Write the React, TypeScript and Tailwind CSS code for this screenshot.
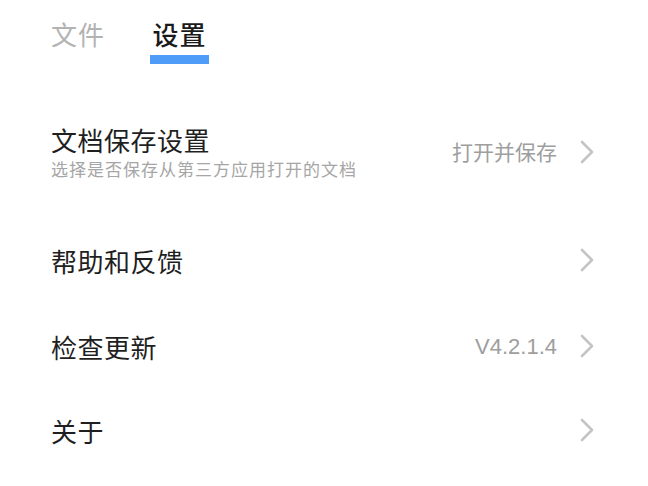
import React from "react";

const Chevron = () => (
  <svg width="14" height="24" viewBox="0 0 14 24" className="shrink-0">
    <path d="M2 2 L12 12 L2 22" fill="none" stroke="#c4c4c4" strokeWidth="2.6" strokeLinecap="round" strokeLinejoin="round" />
  </svg>
);

const font = { fontFamily: '"Noto Sans CJK SC", "Noto Sans", sans-serif' };

export default function App() {
  return (
    <div className="w-[648px] h-[486px] bg-white overflow-hidden" style={font}>
      <div className="flex items-start pl-[51px] pt-[16px] h-[65px]">
        <div className="text-[26px] leading-[36px] text-[#b3b3b3] tracking-[1px]">文件</div>
        <div className="ml-[45px] flex flex-col items-center">
          <div className="text-[26px] leading-[36px] text-[#1a1a1a] font-medium tracking-[1px]">设置</div>
          <div className="mt-[3px] w-[59px] h-[9px] bg-[#4f9cf8]" />
        </div>
      </div>
      <div className="h-[23px]" />
      <div className="flex items-center pl-[51px] pr-[54px] h-[128px]">
        <div className="flex-1 flex flex-col">
          <div className="text-[26px] leading-[32px] text-[#1f1f1f] tracking-[0.5px]">文档保存设置</div>
          <div className="text-[17px] leading-[24px] mt-[1px] text-[#a6a6a6] tracking-[1px]">选择是否保存从第三方应用打开的文档</div>
        </div>
        <div className="text-[21px] text-[#9e9e9e] mr-[23px]">打开并保存</div>
        <Chevron />
      </div>
      <div className="flex items-center pl-[51px] pr-[54px] h-[88px]">
        <div className="flex-1 text-[26px] text-[#1f1f1f] tracking-[0.5px]">帮助和反馈</div>
        <Chevron />
      </div>
      <div className="flex items-center pl-[51px] pr-[54px] h-[84px]">
        <div className="flex-1 text-[26px] text-[#1f1f1f] tracking-[0.5px]">检查更新</div>
        <div className="text-[22px] text-[#9e9e9e] mr-[23px]" style={{ fontFamily: '"Liberation Sans", Arial, sans-serif' }}>V4.2.1.4</div>
        <Chevron />
      </div>
      <div className="flex items-center pl-[51px] pr-[54px] h-[84px]">
        <div className="flex-1 text-[26px] text-[#1f1f1f] tracking-[0.5px]">关于</div>
        <Chevron />
      </div>
    </div>
  );
}
